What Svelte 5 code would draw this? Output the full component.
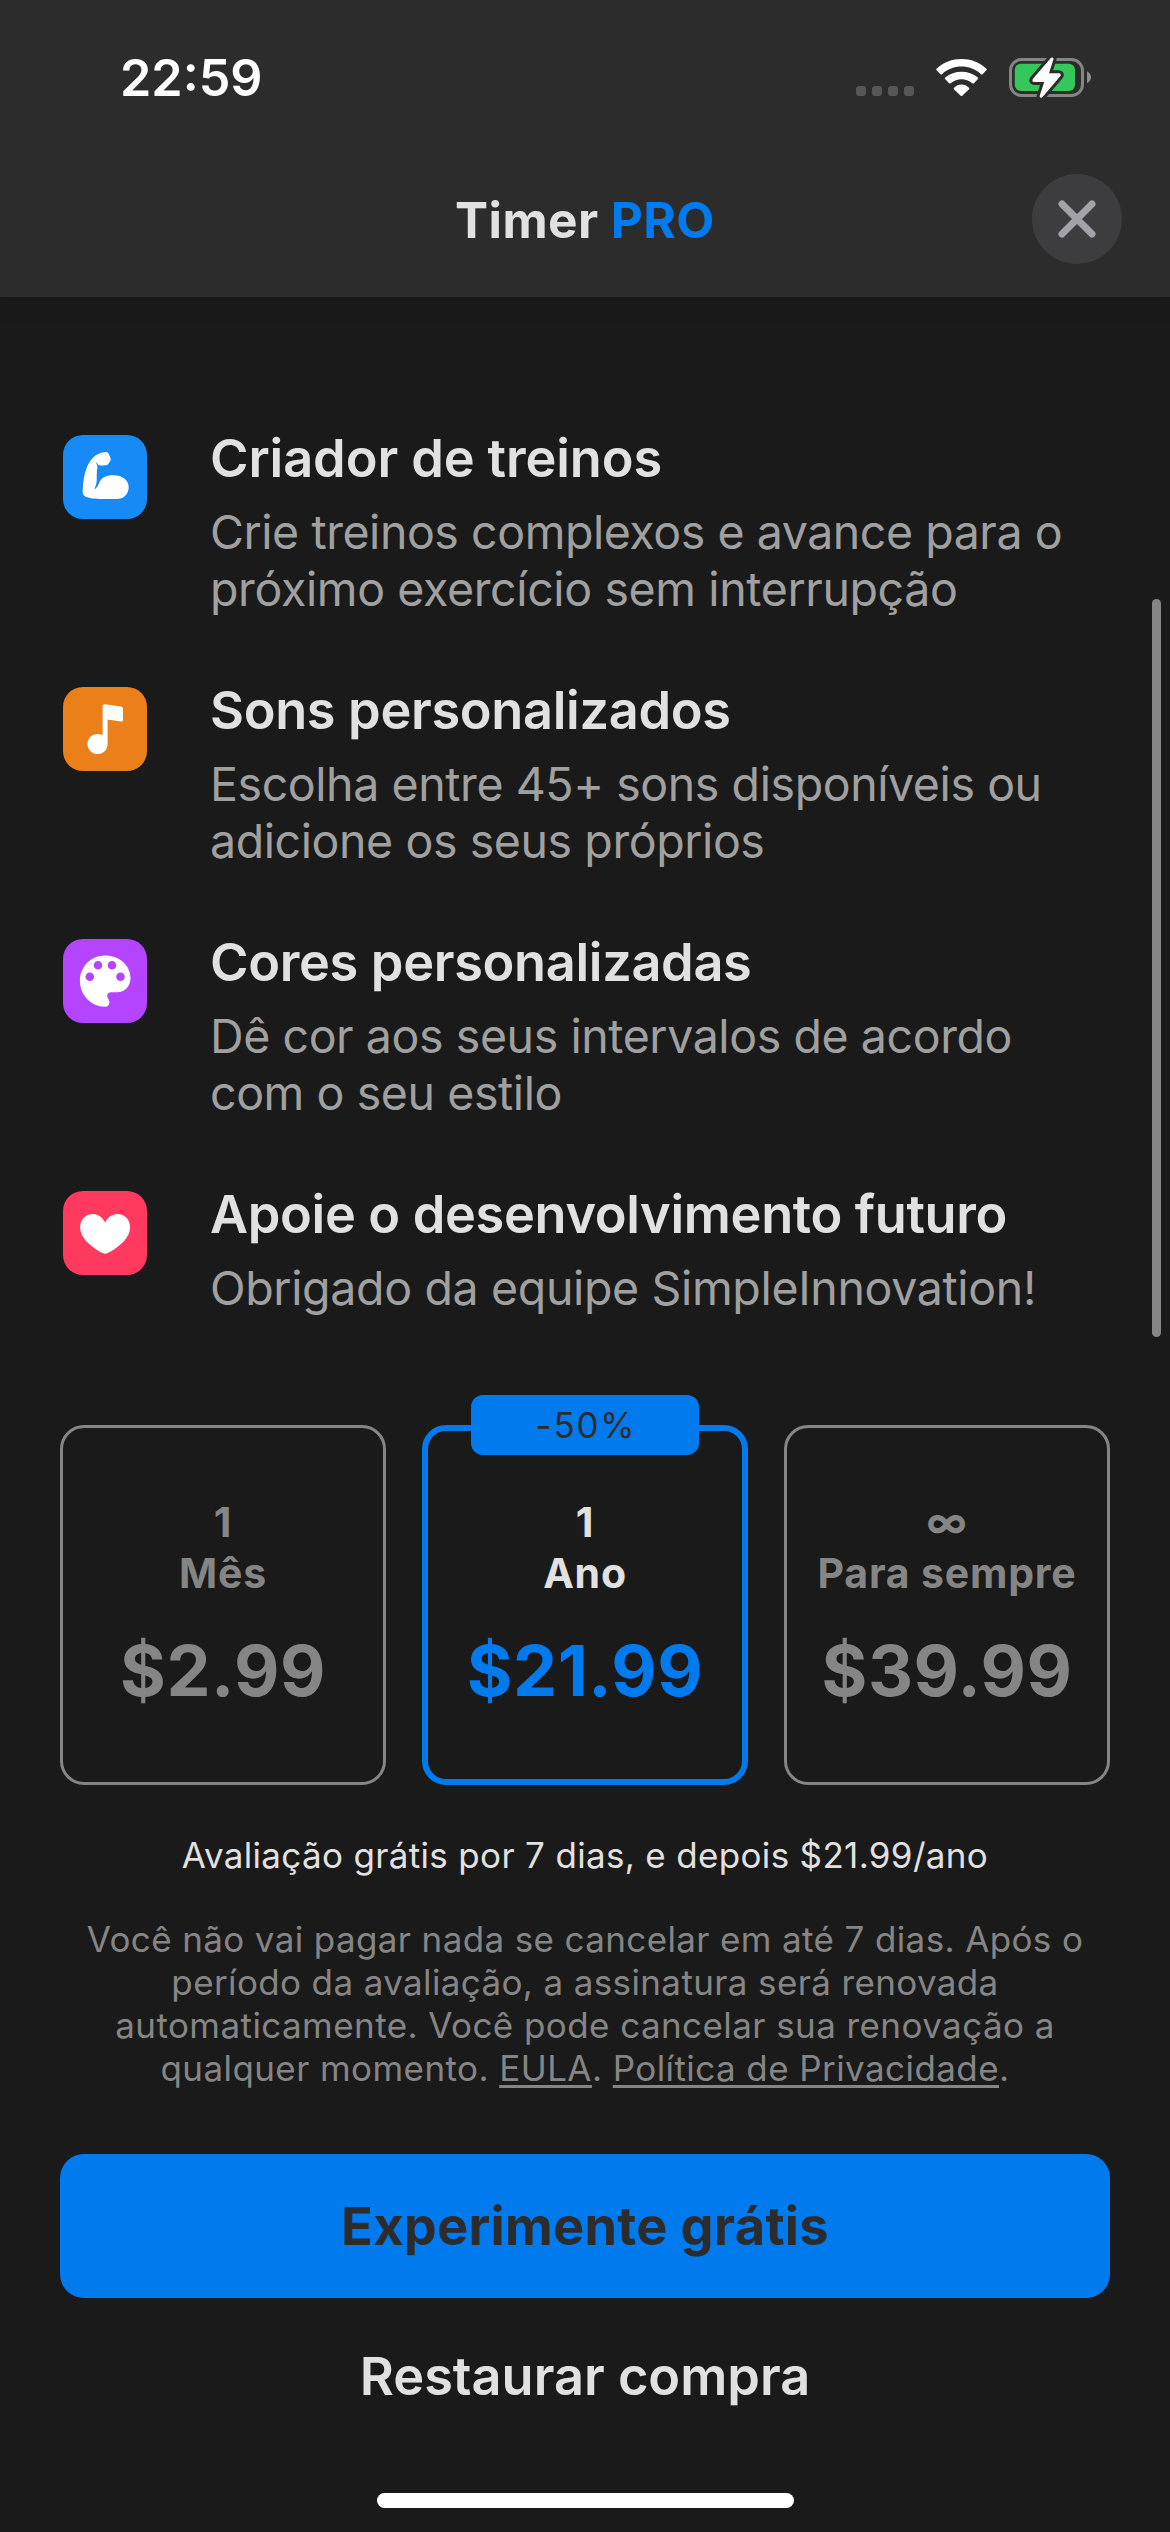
<script>
  const features = [
    { icon: 'arm', title: 'Criador de treinos', lines: ['Crie treinos complexos e avance para o', 'próximo exercício sem interrupção'] },
    { icon: 'note', title: 'Sons personalizados', lines: ['Escolha entre 45+ sons disponíveis ou', 'adicione os seus próprios'] },
    { icon: 'palette', title: 'Cores personalizadas', lines: ['Dê cor aos seus intervalos de acordo', 'com o seu estilo'] },
    { icon: 'heart', title: 'Apoie o desenvolvimento futuro', lines: ['Obrigado da equipe SimpleInnovation!'] }
  ];

  const plans = [
    { count: '1', period: 'Mês', price: '$2.99' },
    { count: '1', period: 'Ano', price: '$21.99', badge: '-50%' },
    { count: '∞', period: 'Para sempre', price: '$39.99' }
  ];

  let selected = $state(1);
</script>

<div class="screen">
  <header>
    <div class="status">
      <span class="time">22:59</span>
      <div class="indicators">
        <div class="signal"><i></i><i></i><i></i><i></i></div>
        <svg class="wifi" viewBox="0 0 51 37" width="51" height="37">
          <path d="M.6 11.2Q-.1 10.4.6 9.7C14-3.2 37-3.2 50.4 9.7Q51.1 10.4 50.4 11.2L46.6 15.2Q45.8 15.9 45 15.2C34 5 17 5 6 15.2Q5.2 15.9 4.4 15.2Z" />
          <path d="M9.1 20Q8.4 19.2 9.2 18.5C18 10.8 33 10.8 41.8 18.5Q42.6 19.2 41.9 20L37.9 24.2Q37.1 24.9 36.3 24.2C30 19 21 19 14.7 24.2Q13.9 24.9 13.1 24.2Z" />
          <path d="M17.9 30.2Q17.4 29.4 18 28.8C22 24.3 29 24.3 33 28.8Q33.6 29.4 33.1 30.2L26.3 36.7Q25.5 37.4 24.7 36.7Z" />
        </svg>
        <svg class="battery" viewBox="0 0 83 42" width="83" height="42">
          <rect x="1.5" y="2.5" width="72" height="36" rx="11" fill="none" stroke="#858585" stroke-width="3" />
          <path d="M78 14.3C80.5 15.6 82 17.8 82 20.3S80.5 25 78 26.3Z" fill="#8e8e8e" />
          <rect x="5.8" y="6.8" width="60.2" height="27.3" rx="6" fill="#34c759" />
          <path class="bolt-gap" d="M41.6 1.2C42.9-.3 45 .7 44.4 2.6L40 16.2H49.4C51.8 16.2 52.6 17.8 51 19.6L33.6 40C32.3 41.5 30.2 40.5 30.8 38.6L35.2 25H25.8C23.4 25 22.6 23.4 24.2 21.6Z" />
          <path d="M41.6 1.2C42.9-.3 45 .7 44.4 2.6L40 16.2H49.4C51.8 16.2 52.6 17.8 51 19.6L33.6 40C32.3 41.5 30.2 40.5 30.8 38.6L35.2 25H25.8C23.4 25 22.6 23.4 24.2 21.6Z" fill="#fff" />
        </svg>
      </div>
    </div>
    <div class="nav">
      <h1>Timer <span>PRO</span></h1>
      <button class="close" aria-label="Fechar">
        <svg viewBox="0 0 38 38" width="38" height="38"><path d="M4 4 34 34M34 4 4 34" /></svg>
      </button>
    </div>
  </header>

  <main>
    <ul class="features">
      {#each features as f}
        <li class={f.icon}>
          <svg class="icon" viewBox="0 0 84 84" width="84" height="84">
            {#if f.icon === 'arm'}
              <path d="M42.7 17C44.5 16.9 45.6 18 46.2 20 46.8 22 48 23 47.6 25.2 47.4 26.6 46 27 45.8 28.2 45 30 43 30.4 41.5 30.2 39 30.6 36.5 31 34.8 29.2 33.8 28 33.4 27.6 33 26.8 32.8 28.6 34.8 30.2 34.4 33 33.4 39 33.9 42 33.7 46 33.3 50 32.3 51 31.5 54.2 34 53 35.6 49 36.8 46.4 39 42 44 40.2 50.8 40.2 59 40.2 65.7 45 65.7 52 65.7 59.5 60.5 64 53.5 64H43C34 64 28 63.8 23.5 62 20.3 60.7 19.5 59 19.6 55.5 20 46 21.5 38 24 32 27.5 23.5 33.5 17.8 42.7 17Z" />
            {:else if f.icon === 'note'}
              <path d="M39.6 48.3V18.9Q39.6 16.9 41.7 17.2L58 19.4Q60 19.7 60 21.5V33Q60 34.9 58 34.6L44.6 32.4V57A10.1 10.1 0 1 1 39.6 48.3Z" />
            {:else if f.icon === 'palette'}
              <path fill-rule="evenodd" d="M42 16.4C56 16.4 67.5 26 67.5 39 67.5 47.5 61.8 53.2 54 53.2H48.5C44.8 53.2 43.6 55.5 44.6 58.6 45 60 46.4 61 46.4 63.2 46.4 66 44.8 67.7 42 67.7 28 67.7 16.9 56 16.9 42 16.9 27.5 28 16.4 42 16.4ZM30.7 26.3a4.3 4.3 0 1 0 8.6 0a4.3 4.3 0 1 0-8.6 0ZM44.7 26.3a4.3 4.3 0 1 0 8.6 0a4.3 4.3 0 1 0-8.6 0ZM22.5 37.7a4.3 4.3 0 1 0 8.6 0a4.3 4.3 0 1 0-8.6 0ZM53.2 37.7a4.3 4.3 0 1 0 8.6 0a4.3 4.3 0 1 0-8.6 0Z" />
            {:else}
              <path d="M42.1 31.8C39.8 26.6 35.4 23.1 30 23.1 22.5 23.1 17.1 28.6 17.1 36.3 17.1 46.5 26.5 54.5 36.5 60.6 39 62 41 62.8 42.1 62.8S45.2 62 47.7 60.6C57.7 54.5 67.1 46.5 67.1 36.3 67.1 28.6 61.7 23.1 54.2 23.1 48.8 23.1 44.4 26.6 42.1 31.8Z" />
            {/if}
          </svg>
          <div>
            <h2>{f.title}</h2>
            <p>{#each f.lines as line}<span>{line}</span>{/each}</p>
          </div>
        </li>
      {/each}
    </ul>

    <div class="plans">
      {#each plans as plan, i}
        <button class="plan" class:selected={selected === i} onclick={() => (selected = i)}>
          {#if plan.badge}<span class="badge">{plan.badge}</span>{/if}
          <span class="term">{plan.count}</span>
          <span class="term">{plan.period}</span>
          <span class="price">{plan.price}</span>
        </button>
      {/each}
    </div>

    <p class="trial">Avaliação grátis por 7 dias, e depois $21.99/ano</p>
    <p class="legal">
      <span>Você não vai pagar nada se cancelar em até 7 dias. Após o</span>
      <span>período da avaliação, a assinatura será renovada</span>
      <span>automaticamente. Você pode cancelar sua renovação a</span>
      <span>qualquer momento. <u>EULA</u>. <u>Política de Privacidade</u>.</span>
    </p>

    <button class="primary">Experimente grátis</button>
    <button class="restore">Restaurar compra</button>
    <div class="home"></div>
  </main>
  <div class="scrollbar"></div>
</div>

<style>
  :global(body) {
    margin: 0;
    background: #1a1a1a;
  }
  .screen {
    position: relative;
    width: 1170px;
    height: 2532px;
    overflow: hidden;
    background: #1a1a1a;
    color: #e1e1e1;
    font-family: Inter, 'Liberation Sans', sans-serif;
  }
  h1, h2, p, ul {
    margin: 0;
    padding: 0;
  }
  button {
    font: inherit;
    color: inherit;
    background: none;
    border: 0;
    padding: 0;
    box-sizing: border-box;
  }
  svg {
    display: block;
    flex: none;
  }
  header {
    height: 297px;
    background: #2c2c2c;
    box-shadow: 0 0 30px rgba(0, 0, 0, 0.13);
  }
  .status {
    display: flex;
    justify-content: space-between;
    height: 174px;
    padding: 0 78px 0 120px;
  }
  .time {
    margin-top: 48px;
    font-size: 50.3px;
    line-height: 60px;
    font-weight: 600;
    color: #fff;
  }
  .indicators {
    display: flex;
    align-items: flex-start;
    padding-top: 57px;
  }
  .signal {
    display: flex;
    gap: 6px;
    margin: 29px 22px 0 0;
  }
  .signal i {
    width: 10px;
    height: 10px;
    border-radius: 3px;
    background: #565656;
  }
  .wifi {
    margin: 2px 22px 0 0;
    fill: #fff;
  }
  .bolt-gap {
    fill: #2c2c2c;
    stroke: #2c2c2c;
    stroke-width: 6;
    stroke-linejoin: round;
  }
  .nav {
    display: grid;
    grid-template-columns: 90px 1fr 90px;
    padding: 0 48px;
  }
  h1 {
    grid-column: 2;
    margin-top: 16px;
    text-align: center;
    font-size: 49.5px;
    line-height: 60px;
    font-weight: 700;
    letter-spacing: 0.45px;
  }
  h1 span {
    color: #007aec;
  }
  .close {
    display: grid;
    place-items: center;
    width: 90px;
    height: 90px;
    border-radius: 50%;
    background: #3d3d3f;
  }
  .close path {
    stroke: #a3a2a9;
    stroke-width: 7;
    stroke-linecap: round;
  }
  main {
    display: flex;
    flex-direction: column;
    padding: 129px 60px 0;
  }
  .features {
    display: flex;
    flex-direction: column;
    gap: 60px;
    list-style: none;
  }
  li {
    display: flex;
    gap: 63px;
    padding-left: 3px;
  }
  .icon {
    margin-top: 9px;
    border-radius: 20px;
    fill: #fff;
  }
  .arm .icon { background: #188af6; }
  .note .icon { background: #eb7f1a; }
  .palette .icon { background: #b444ff; }
  .heart .icon { background: #ff3a5e; }
  h2 {
    font-size: 52.3px;
    line-height: 64px;
    font-weight: 600;
    letter-spacing: -0.33px;
    white-space: nowrap;
  }
  .arm h2 { letter-spacing: -0.1px; }
  li p {
    margin-top: 14px;
    font-size: 46.5px;
    line-height: 57px;
    letter-spacing: -0.35px;
    color: #a0a0a0;
    white-space: nowrap;
  }
  .arm p { letter-spacing: -0.45px; }
  .arm p span:last-child { letter-spacing: -0.38px; }
  .note p, .palette p { letter-spacing: -0.42px; }
  li p span, .legal span {
    display: block;
  }
  .plans {
    display: grid;
    grid-template-columns: repeat(3, 326px);
    gap: 36px;
    margin-top: 108px;
  }
  .plan {
    --edge: 3px;
    position: relative;
    display: flex;
    flex-direction: column;
    align-items: center;
    height: 360px;
    padding-top: calc(72px - var(--edge));
    border: var(--edge) solid #858585;
    border-radius: 24px;
    color: #858585;
    font-weight: 700;
    white-space: nowrap;
  }
  .selected {
    --edge: 6px;
    border-color: #007aec;
    color: #e1e1e1;
  }
  .term {
    font-size: 41px;
    line-height: 51px;
    letter-spacing: 0.8px;
  }
  .price {
    margin-top: 29px;
    font-size: 70px;
    line-height: 85px;
    letter-spacing: 0.5px;
  }
  .selected .price {
    color: #007aec;
  }
  .badge {
    position: absolute;
    top: -36px;
    left: 43px;
    width: 228px;
    height: 60px;
    border-radius: 12px;
    background: #007aec;
    color: #2c2c2c;
    font-size: 35px;
    line-height: 61px;
    font-weight: 400;
    letter-spacing: 1.8px;
    text-indent: 2px;
    text-align: center;
  }
  .trial {
    margin-top: 48px;
    text-align: center;
    font-size: 35px;
    line-height: 44px;
    letter-spacing: 0.33px;
  }
  .legal {
    margin-top: 41px;
    text-align: center;
    font-size: 35px;
    line-height: 43px;
    letter-spacing: 0.37px;
    color: #858585;
    white-space: nowrap;
  }
  .legal span:nth-child(n + 3) {
    letter-spacing: 0.42px;
  }
  u {
    text-decoration-thickness: 3px;
    text-underline-offset: 4px;
    text-decoration-skip-ink: none;
  }
  .primary {
    height: 144px;
    margin-top: 64px;
    border-radius: 24px;
    background: #007aec;
    color: #2c2c2c;
    font-size: 52.3px;
    line-height: 64px;
    font-weight: 700;
    letter-spacing: 0.31px;
  }
  .restore {
    margin-top: 46px;
    font-size: 52.3px;
    line-height: 64px;
    font-weight: 600;
  }
  .home {
    align-self: center;
    width: 417px;
    height: 15px;
    margin-top: 85px;
    border-radius: 8px;
    background: #fff;
  }
  .scrollbar {
    position: absolute;
    top: 599px;
    right: 9px;
    width: 9px;
    height: 738px;
    border-radius: 5px;
    background: #858585;
  }
</style>
